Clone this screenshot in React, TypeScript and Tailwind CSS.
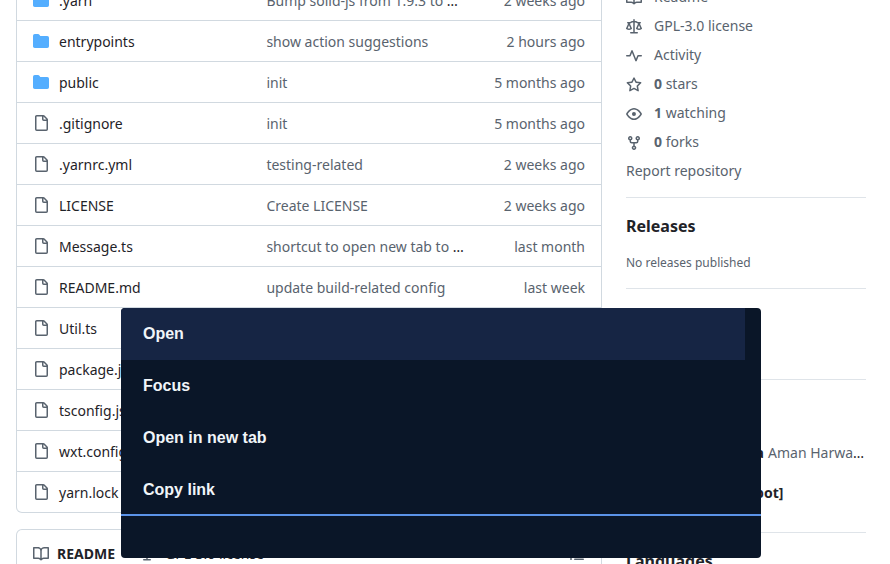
import type { ReactNode } from "react";

const PATHS = {
  file: "M2 1.75C2 .784 2.784 0 3.75 0h6.586c.464 0 .909.184 1.237.513l2.914 2.914c.329.328.513.773.513 1.237v9.586A1.75 1.75 0 0 1 13.25 16h-9.5A1.75 1.75 0 0 1 2 14.25Zm1.75-.25a.25.25 0 0 0-.25.25v12.5c0 .138.112.25.25.25h9.5a.25.25 0 0 0 .25-.25V6h-2.75A1.75 1.75 0 0 1 9 4.25V1.5Zm6.75.062V4.25c0 .138.112.25.25.25h2.688l-.011-.013-2.914-2.914-.013-.011Z",
  folder:
    "M1.75 1A1.75 1.75 0 0 0 0 2.75v10.5C0 14.216.784 15 1.75 15h12.5A1.75 1.75 0 0 0 16 13.25v-8.5A1.75 1.75 0 0 0 14.25 3H7.5a.25.25 0 0 1-.2-.1l-.9-1.2C6.07 1.26 5.55 1 5 1H1.75Z",
  book: "M0 1.75A.75.75 0 0 1 .75 1h4.253c1.227 0 2.317.59 3 1.501A3.743 3.743 0 0 1 11.006 1h4.245a.75.75 0 0 1 .75.75v10.5a.75.75 0 0 1-.75.75h-4.507a2.25 2.25 0 0 0-1.591.659l-.622.621a.75.75 0 0 1-1.06 0l-.622-.621A2.25 2.25 0 0 0 5.258 13H.75a.75.75 0 0 1-.75-.75Zm7.251 10.324.004-5.073-.002-2.253A2.25 2.25 0 0 0 5.003 2.5H1.5v9h3.757a3.75 3.75 0 0 1 1.994.574ZM8.755 4.75l-.004 7.322a3.752 3.752 0 0 1 1.992-.572H14.5v-9h-3.495a2.25 2.25 0 0 0-2.25 2.25Z",
  law: "M8.75.75V2h.985c.304 0 .603.08.867.231l1.29.736c.038.022.08.033.124.033h2.234a.75.75 0 0 1 0 1.5h-.427l2.111 4.692a.75.75 0 0 1-.154.838l-.53-.53.529.531-.001.002-.002.002-.006.006-.006.005-.01.01-.045.04c-.21.176-.441.327-.686.45C14.556 10.78 13.88 11 13 11a4.498 4.498 0 0 1-2.023-.454 3.544 3.544 0 0 1-.686-.45l-.045-.04-.016-.015-.006-.006-.004-.004v-.001a.75.75 0 0 1-.154-.838L12.178 4.5h-.162c-.305 0-.604-.079-.868-.231l-1.29-.736a.245.245 0 0 0-.124-.033H8.75V13h2.5a.75.75 0 0 1 0 1.5h-6.5a.75.75 0 0 1 0-1.5h2.5V3.5h-.984a.245.245 0 0 0-.124.033l-1.289.737c-.265.15-.564.23-.869.23h-.162l2.112 4.692a.75.75 0 0 1-.154.838l-.53-.53.529.531-.001.002-.002.002-.006.006-.016.015-.045.04c-.21.176-.441.327-.686.45C4.556 10.78 3.88 11 3 11a4.498 4.498 0 0 1-2.023-.454 3.544 3.544 0 0 1-.686-.45l-.045-.04-.016-.015-.006-.006-.004-.004v-.001a.75.75 0 0 1-.154-.838L2.178 4.5H1.75a.75.75 0 0 1 0-1.5h2.234a.249.249 0 0 0 .125-.033l1.288-.737c.265-.15.564-.23.869-.23h.984V.75a.75.75 0 0 1 1.5 0Zm2.945 8.477c.285.135.718.273 1.305.273s1.02-.138 1.305-.273L13 6.327Zm-10 0c.285.135.718.273 1.305.273s1.02-.138 1.305-.273L3 6.327Z",
  pulse:
    "M6 2c.306 0 .582.187.696.471L10 10.731l1.304-3.26A.751.751 0 0 1 12 7h3.25a.75.75 0 0 1 0 1.5h-2.742l-1.812 4.528a.751.751 0 0 1-1.392 0L6 4.77 4.696 8.03A.75.75 0 0 1 4 8.5H.75a.75.75 0 0 1 0-1.5h2.742l1.812-4.529A.751.751 0 0 1 6 2Z",
  star: "M8 .25a.75.75 0 0 1 .673.418l1.882 3.815 4.21.612a.75.75 0 0 1 .416 1.279l-3.046 2.97.719 4.192a.751.751 0 0 1-1.088.791L8 12.347l-3.766 1.98a.75.75 0 0 1-1.088-.79l.72-4.194L.818 6.374a.75.75 0 0 1 .416-1.28l4.21-.611L7.327.668A.75.75 0 0 1 8 .25Zm0 2.445L6.615 5.5a.75.75 0 0 1-.564.41l-3.097.45 2.24 2.184a.75.75 0 0 1 .216.664l-.528 3.084 2.769-1.456a.75.75 0 0 1 .698 0l2.77 1.456-.53-3.084a.75.75 0 0 1 .216-.664l2.24-2.183-3.096-.45a.75.75 0 0 1-.564-.41L8 2.694Z",
  eye: "M8 2c1.981 0 3.671.992 4.933 2.078 1.27 1.091 2.187 2.345 2.637 3.023a1.62 1.62 0 0 1 0 1.798c-.45.678-1.367 1.932-2.637 3.023C11.67 13.008 9.981 14 8 14c-1.981 0-3.671-.992-4.933-2.078C1.797 10.83.88 9.576.43 8.898a1.62 1.62 0 0 1 0-1.798c.45-.677 1.367-1.931 2.637-3.022C4.33 2.992 6.019 2 8 2ZM1.679 7.932a.12.12 0 0 0 0 .136c.411.622 1.241 1.75 2.366 2.717C5.176 11.758 6.527 12.5 8 12.5c1.473 0 2.825-.742 3.955-1.715 1.124-.967 1.954-2.096 2.366-2.717a.12.12 0 0 0 0-.136c-.412-.621-1.242-1.75-2.366-2.717C10.824 4.242 9.473 3.5 8 3.5c-1.473 0-2.825.742-3.955 1.715-1.124.967-1.954 2.096-2.366 2.717ZM8 10a2 2 0 1 1-.001-3.999A2 2 0 0 1 8 10Z",
  fork: "M5 5.372v.878c0 .414.336.75.75.75h4.5a.75.75 0 0 0 .75-.75v-.878a2.25 2.25 0 1 1 1.5 0v.878a2.25 2.25 0 0 1-2.25 2.25h-1.5v2.128a2.251 2.251 0 1 1-1.5 0V8.5h-1.5A2.25 2.25 0 0 1 3.5 6.25v-.878a2.25 2.25 0 1 1 1.5 0ZM5 3.25a.75.75 0 1 0-1.5 0 .75.75 0 0 0 1.5 0Zm6.75.75a.75.75 0 1 0 0-1.5.75.75 0 0 0 0 1.5Zm-3 8.75a.75.75 0 1 0-1.5 0 .75.75 0 0 0 1.5 0Z",
  list: "M5.75 2.5h8.5a.75.75 0 0 1 0 1.5h-8.5a.75.75 0 0 1 0-1.5Zm0 5h8.5a.75.75 0 0 1 0 1.5h-8.5a.75.75 0 0 1 0-1.5Zm0 5h8.5a.75.75 0 0 1 0 1.5h-8.5a.75.75 0 0 1 0-1.5ZM2 14a1 1 0 1 1 0-2 1 1 0 0 1 0 2Zm1-6a1 1 0 1 1-2 0 1 1 0 0 1 2 0ZM2 4a1 1 0 1 1 0-2 1 1 0 0 1 0 2Z",
};

type IconName = keyof typeof PATHS;

function Icon({ name, className = "text-[#59636e]" }: { name: IconName; className?: string }) {
  return (
    <svg viewBox="0 0 16 16" fill="currentColor" className={`size-4 shrink-0 ${className}`}>
      <path d={PATHS[name]} />
    </svg>
  );
}

type Entry = { name: string; message?: string; age?: string; folder?: boolean; cut?: boolean };

const ENTRIES: Entry[] = [
  { name: ".yarn", message: "Bump solid-js from 1.9.3 to ", age: "2 weeks ago", folder: true, cut: true },
  { name: "entrypoints", message: "show action suggestions", age: "2 hours ago", folder: true },
  { name: "public", message: "init", age: "5 months ago", folder: true },
  { name: ".gitignore", message: "init", age: "5 months ago" },
  { name: ".yarnrc.yml", message: "testing-related", age: "2 weeks ago" },
  { name: "LICENSE", message: "Create LICENSE", age: "2 weeks ago" },
  { name: "Message.ts", message: "shortcut to open new tab to ", age: "last month", cut: true },
  { name: "README.md", message: "update build-related config", age: "last week" },
  { name: "Util.ts" },
  { name: "package.json" },
  { name: "tsconfig.json" },
  { name: "wxt.config.ts" },
  { name: "yarn.lock" },
];

function FileRow({ entry }: { entry: Entry }) {
  return (
    <div className="flex h-[41px] items-center border-t border-[#d1d9e0] px-4">
      <Icon
        name={entry.folder ? "folder" : "file"}
        className={entry.folder ? "text-[#54aeff]" : "text-[#59636e]"}
      />
      <span className="ml-[10px] w-[207.4px] whitespace-nowrap pt-px text-[#1f2328]">{entry.name}</span>
      <span className="whitespace-nowrap pt-px">
        {entry.message}
        {entry.cut && <span className="text-[#1f2328]">…</span>}
      </span>
      <span className="ml-auto whitespace-nowrap pt-px">{entry.age}</span>
    </div>
  );
}

function Meta({ icon, children }: { icon: IconName; children: ReactNode }) {
  return (
    <div className="mb-2 flex h-[21px] items-start gap-3">
      <Icon name={icon} className="mt-1 text-[#59636e]" />
      <span>{children}</span>
    </div>
  );
}

const ACTIONS = ["Open", "Focus", "Open in new tab", "Copy link"];

function ActionPopup() {
  return (
    <div className="absolute left-[121px] top-[308px] flex h-[250px] w-[640px] flex-col overflow-hidden rounded-[4px] bg-[#0a1628] font-['Liberation_Sans',sans-serif] text-base font-bold text-[#f1f5f9]">
      <div className="h-[206px] overflow-hidden pr-4">
        {ACTIONS.map((action, i) => (
          <div key={action} className={`flex h-[52px] items-center px-[22px] ${i === 0 ? "bg-[#162544]" : ""}`}>
            {action}
          </div>
        ))}
      </div>
      <div className="flex-1 border-t-2 border-[#5b93e8]" />
    </div>
  );
}

export default function App() {
  return (
    <div className="relative h-[564px] w-[890px] overflow-hidden bg-white font-['Noto_Sans',sans-serif] text-sm leading-[21px] text-[#59636e]">
      <div className="flex gap-6 pl-4">
        <main className="-mt-[21px] w-[586px] shrink-0">
          <div className="rounded-b-md border border-t-0 border-[#d1d9e0]">
            {ENTRIES.map((entry) => (
              <FileRow key={entry.name} entry={entry} />
            ))}
          </div>
          <div className="mt-4 h-[60px] rounded-t-md border border-b-0 border-[#d1d9e0]">
            <div className="flex h-[47px] items-center px-4 text-[#1f2328]">
              <Icon name="book" />
              <span className="ml-2 w-[82px] font-bold">README</span>
              <Icon name="law" />
              <span className="ml-[10px]">GPL-3.0 license</span>
              <Icon name="list" className="ml-auto text-[#59636e]" />
            </div>
          </div>
        </main>
        <aside className="-mt-[14px] w-60 shrink-0">
          <div className="h-[211px]">
            <Meta icon="book">Readme</Meta>
            <Meta icon="law">GPL-3.0 license</Meta>
            <Meta icon="pulse">Activity</Meta>
            <Meta icon="star">
              <b>0</b> stars
            </Meta>
            <Meta icon="eye">
              <b>1</b> watching
            </Meta>
            <Meta icon="fork">
              <b>0</b> forks
            </Meta>
            <div>Report repository</div>
          </div>
          <section className="h-[91px] border-t border-[#d1d9e0]/70 pt-4">
            <h2 className="text-base font-bold leading-6 text-[#1f2328]">Releases</h2>
            <p className="mt-4 text-xs leading-[18px]">No releases published</p>
          </section>
          <section className="h-[91px] border-t border-[#d1d9e0]/70" />
          <section className="h-[153px] border-t border-[#d1d9e0]/70 pt-[60px] text-[#1f2328]">
            <div className="flex h-6 items-center whitespace-nowrap pl-10">
              <b>amanharwara</b>
              <span className="ml-1 text-[#59636e]">Aman Harwa</span>…
            </div>
            <div className="mt-4 flex h-6 items-center pl-10 font-bold">dependabot[bot]</div>
          </section>
          <section className="border-t border-[#d1d9e0]/70 pt-4">
            <h2 className="text-base font-bold leading-6 text-[#1f2328]">Languages</h2>
          </section>
        </aside>
      </div>
      <ActionPopup />
    </div>
  );
}
